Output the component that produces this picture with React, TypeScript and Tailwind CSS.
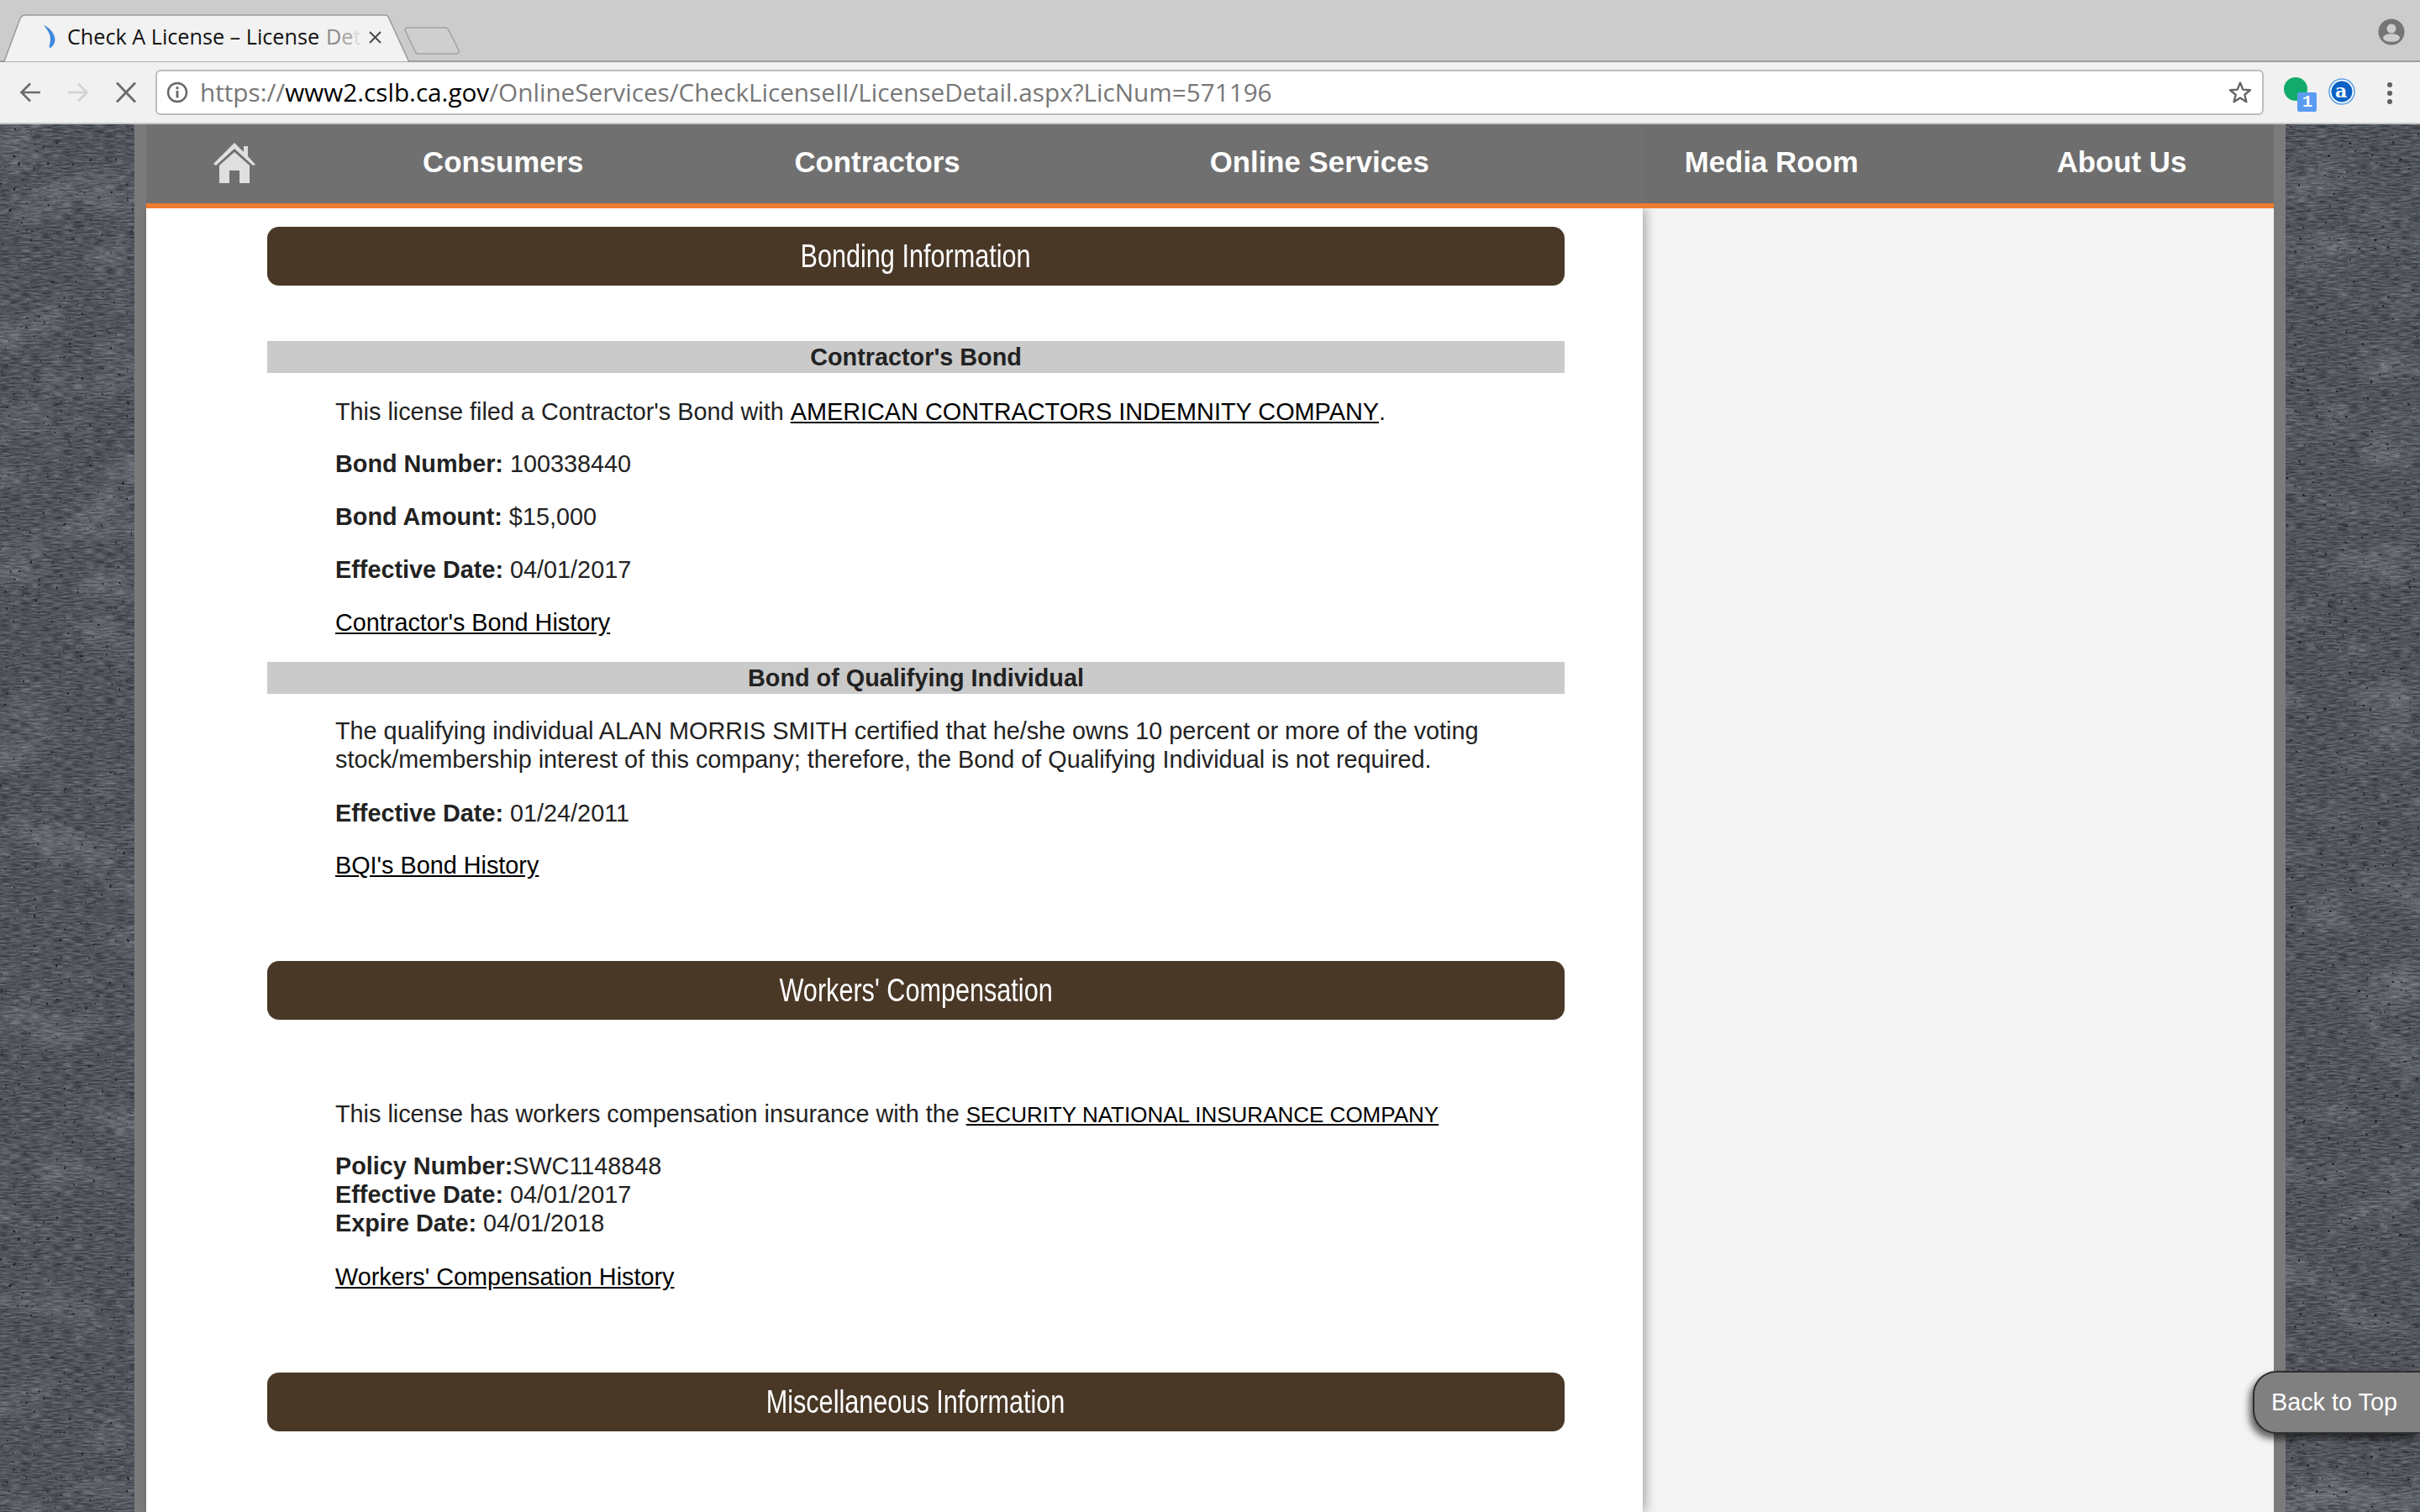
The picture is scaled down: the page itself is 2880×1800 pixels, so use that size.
import React from "react";

const Texture = ({ id }: { id: string }) => (
  <svg className="block h-full w-full" aria-hidden="true">
    <defs>
      <filter id={id} x="0" y="0" width="100%" height="100%" colorInterpolationFilters="sRGB">
        <feTurbulence type="fractalNoise" baseFrequency="0.08 0.5" numOctaves={3} seed={id === "a" ? 4 : 9} result="fine" />
        <feColorMatrix in="fine" type="matrix" values="0.36 0 0 0 0.135  0.36 0 0 0 0.15  0.36 0 0 0 0.175  0 0 0 0 1" result="weave" />
        <feTurbulence type="fractalNoise" baseFrequency="0.012 0.018" numOctaves={3} seed={id === "a" ? 11 : 23} result="cloud" />
        <feColorMatrix in="cloud" type="matrix" values="0.9 0 0 0 -0.45  0.9 0 0 0 -0.45  0.9 0 0 0 -0.45  0 0 0 0 1" result="cloudTone" />
        <feComposite in="weave" in2="cloudTone" operator="arithmetic" k1="0" k2="1" k3="0.28" k4="0" result="base" />
        <feTurbulence type="fractalNoise" baseFrequency="0.2" numOctaves={2} seed={id === "a" ? 31 : 37} result="speckNoise" />
        <feColorMatrix in="speckNoise" type="matrix" values="0 0 0 0 0.13  0 0 0 0 0.14  0 0 0 0 0.16  14 0 0 0 -10.2" result="specks" />
        <feMerge>
          <feMergeNode in="base" />
          <feMergeNode in="specks" />
        </feMerge>
      </filter>
    </defs>
    <rect width="100%" height="100%" fill="#4c525c" filter={`url(#${id})`} />
  </svg>
);

const Header = ({ children, className = "" }: { children: React.ReactNode; className?: string }) => (
  <div className={`flex h-[70px] items-center justify-center rounded-[14px] bg-[#4a3827] text-white ${className}`}>
    <span className="inline-block scale-x-[0.785] whitespace-nowrap font-['Liberation_Sans'] text-[39px]">{children}</span>
  </div>
);

const SubHeader = ({ children, className = "" }: { children: React.ReactNode; className?: string }) => (
  <div className={`flex h-[38px] items-center justify-center bg-[#cacaca] pb-[1px] text-[28.8px] font-bold text-[#222] ${className}`}>
    {children}
  </div>
);

const Row = ({ children, className = "" }: { children: React.ReactNode; className?: string }) => (
  <p className={`whitespace-nowrap pl-[81px] ${className}`}>{children}</p>
);

const Link = ({ children, className = "" }: { children: React.ReactNode; className?: string }) => (
  <a className={`text-black underline ${className}`}>{children}</a>
);

const navItems: [string, string][] = [
  ["Consumers", "ml-[199px]"],
  ["Contractors", "ml-[251px]"],
  ["Online Services", "ml-[297px]"],
  ["Media Room", "ml-[304px]"],
  ["About Us", "ml-[236px]"],
];

export default function App() {
  return (
    <div className="relative flex h-[1800px] w-[2880px] flex-col overflow-hidden font-['Liberation_Sans',sans-serif]">
      {/* tab strip */}
      <div className="relative flex h-[74px] shrink-0 items-center border-b-2 border-[#9d9d9d] bg-[#cccccc]">
        <svg className="absolute left-0 top-0" width="560" height="74" aria-hidden="true">
          <path d="M5 73 L24 22 Q26 18 30 18 L458 18 Q462 18 463 22 L487 74 L5 74 Z" fill="#f2f2f2" stroke="#999" strokeWidth="1.5" />
          <path d="M482 36 Q482 33 486 33 L530 33 Q533 33 534 36 L546 60 Q546 64 543 64 L498 64 Q495 64 494 61 Z" fill="#cfcfcf" stroke="#a2a2a2" strokeWidth="1.5" />
          <path d="M52 30 C64 35 71 50 60 57 C57 57 60 52 60 47 C60 40 56 35 52 30 Z" fill="#3f88dc" />
        </svg>
        <div className="relative ml-[80px] mt-[13px] flex items-center whitespace-nowrap font-['Open_Sans',sans-serif] text-[25.2px] leading-[30px] text-[#111]">
          <span>Check A License – License</span>
          <span className="ml-[8px] text-[#8a8a8a]">D</span>
          <span className="text-[#a8a8a8]">e</span>
          <span className="text-[#dcdcdc]">t</span>
        </div>
        <svg className="absolute left-[439px] top-[37px]" width="15" height="15" viewBox="0 0 15 15" aria-hidden="true">
          <path d="M1 1 L14 14 M14 1 L1 14" stroke="#444" strokeWidth="1.8" />
        </svg>
        <svg className="absolute left-[2830px] top-[22px]" width="32" height="32" viewBox="0 0 32 32" aria-hidden="true">
          <circle cx="16" cy="16" r="15.5" fill="#757575" />
          <circle cx="16" cy="12" r="5.5" fill="#cccccc" />
          <ellipse cx="16" cy="23" rx="10" ry="4.8" fill="#cccccc" />
        </svg>
      </div>

      {/* toolbar */}
      <div className="flex h-[74px] shrink-0 items-center border-b-2 border-[#c8c8c8] bg-[#f1f1f1] pl-[7px]">
        <div className="flex w-[57px] justify-center">
          <svg width="26" height="26" viewBox="0 0 26 26" fill="none" stroke="#6b6b6b" strokeWidth="2.6" aria-hidden="true">
            <path d="M25 13 H3 M13 2.5 L2.5 13 L13 23.5" />
          </svg>
        </div>
        <div className="flex w-[57px] justify-center">
          <svg width="26" height="26" viewBox="0 0 26 26" fill="none" stroke="#d2d2d2" strokeWidth="2.6" aria-hidden="true">
            <path d="M1 13 H23 M13 2.5 L23.5 13 L13 23.5" />
          </svg>
        </div>
        <div className="flex w-[57px] justify-center">
          <svg width="26" height="26" viewBox="0 0 26 26" fill="none" stroke="#6b6b6b" strokeWidth="2.8" aria-hidden="true">
            <path d="M2 1.5 L24 24.5 M24 1.5 L2 24.5" />
          </svg>
        </div>
        <div className="ml-[7px] flex h-[54px] flex-1 items-center rounded-[6px] border-2 border-[#bcbcbc] bg-white pl-[11px] pr-[11px]">
          <svg width="26" height="26" viewBox="0 0 26 26" fill="none" aria-hidden="true">
            <circle cx="13" cy="13" r="11" stroke="#666" strokeWidth="2.4" />
            <circle cx="13" cy="7.8" r="1.7" fill="#666" />
            <path d="M13 11 V19.5" stroke="#666" strokeWidth="2.8" />
          </svg>
          <div className="ml-[14px] whitespace-nowrap font-['Open_Sans',sans-serif] text-[29.7px] leading-[34px] text-[#777]">
            https://<span className="text-black">www2.cslb.ca.gov</span>/OnlineServices/CheckLicenseII/LicenseDetail.aspx?LicNum=571196
          </div>
          <svg className="ml-auto" width="30" height="30" viewBox="0 0 30 30" fill="none" aria-hidden="true">
            <path d="M15 3.5 L18.3 11.6 L27 12.2 L20.3 17.7 L22.4 26.2 L15 21.6 L7.6 26.2 L9.7 17.7 L3 12.2 L11.7 11.6 Z" stroke="#666" strokeWidth="2.4" strokeLinejoin="round" />
          </svg>
        </div>
        <div className="relative h-[74px] w-[186px] shrink-0">
          <svg className="absolute left-[24px] top-[19px]" width="40" height="42" viewBox="0 0 40 42" aria-hidden="true">
            <circle cx="14" cy="14" r="14" fill="#13ab6c" />
            <rect x="16" y="18" width="23" height="23" rx="2" fill="#5b9cf2" />
          </svg>
          <span className="absolute left-[46px] top-[38px] font-['Liberation_Mono',monospace] text-[20px] font-bold leading-[22px] text-white">1</span>
          <svg className="absolute left-[77px] top-[20px]" width="32" height="32" viewBox="0 0 32 32" aria-hidden="true">
            <circle cx="16" cy="16" r="15" fill="#fff" stroke="#5b9fe6" strokeWidth="1.5" />
            <circle cx="16" cy="16" r="12.5" fill="#0b62c4" />
          </svg>
          <span className="absolute left-[85px] top-[21px] font-['DejaVu_Serif',serif] text-[22px] font-bold leading-[28px] text-white">a</span>
          <svg className="absolute left-[146px] top-[24px]" width="8" height="28" viewBox="0 0 8 28" aria-hidden="true">
            <circle cx="4" cy="4" r="3" fill="#5f5f5f" />
            <circle cx="4" cy="14" r="3" fill="#5f5f5f" />
            <circle cx="4" cy="24" r="3" fill="#5f5f5f" />
          </svg>
        </div>
      </div>

      {/* page */}
      <div className="flex min-h-0 flex-1">
        <div className="w-[160px] shrink-0"><Texture id="a" /></div>
        <div className="flex w-[2560px] shrink-0 flex-col border-x-[14px] border-[#7b7b7b]">
          <nav className="relative z-10 flex h-[100px] shrink-0 items-center border-b-[6px] border-[#ed7c30] bg-[linear-gradient(90deg,#707070_1781px,#6e6e6e_1781px)] pb-[4px] text-[34.8px] font-bold text-white">
            <svg className="ml-[80px] h-[50px] w-[50px]" viewBox="0 0 50 50" aria-hidden="true">
              <path d="M25 2 L36 13 V6 H41 V18 L50 28 L47 29 L25 9 L3 29 L0 27 Z" fill="#dfdfdf" />
              <path d="M25 13 L43 29 V50 H31 V35 H19 V50 H7 V29 Z" fill="#dfdfdf" />
            </svg>
            {navItems.map(([label, ml]) => (
              <span key={label} className={`${ml} whitespace-nowrap`}>{label}</span>
            ))}
          </nav>
          <div className="flex min-h-0 flex-1">
            <main className="relative z-[1] w-[1781px] shrink-0 bg-white pl-[144px] pr-[93px] pt-[22px] text-[28.8px] leading-[34px] text-[#222] shadow-[4px_0_12px_rgba(0,0,0,0.3)]">
              <Header>Bonding Information</Header>
              <SubHeader className="mt-[66px]">Contractor's Bond</SubHeader>
              <Row className="mt-[29px]">This license filed a Contractor's Bond with <Link className="text-[28.85px]">AMERICAN CONTRACTORS INDEMNITY COMPANY</Link>.</Row>
              <Row className="mt-[28px]"><b>Bond Number:</b> 100338440</Row>
              <Row className="mt-[29px]"><b>Bond Amount:</b> $15,000</Row>
              <Row className="mt-[29px]"><b>Effective Date:</b> 04/01/2017</Row>
              <Row className="mt-[29px]"><Link>Contractor's Bond History</Link></Row>
              <SubHeader className="mt-[30px]">Bond of Qualifying Individual</SubHeader>
              <Row className="mt-[27px]">The qualifying individual ALAN MORRIS SMITH certified that he/she owns 10 percent or more of the voting<br />stock/membership interest of this company; therefore, the Bond of Qualifying Individual is not required.</Row>
              <Row className="mt-[30px]"><b>Effective Date:</b> 01/24/2011</Row>
              <Row className="mt-[28px]"><Link>BQI's Bond History</Link></Row>
              <Header className="mt-[97px]">Workers' Compensation</Header>
              <Row className="mt-[95px]">This license has workers compensation insurance with the <Link className="text-[26px]">SECURITY NATIONAL INSURANCE COMPANY</Link></Row>
              <Row className="mt-[27px]"><b>Policy Number:</b>SWC1148848<br /><b>Effective Date:</b> 04/01/2017<br /><b>Expire Date:</b> 04/01/2018</Row>
              <Row className="mt-[30px]"><Link>Workers' Compensation History</Link></Row>
              <Header className="mt-[97px]">Miscellaneous Information</Header>
            </main>
            <aside className="flex-1 bg-[#f4f4f4]" />
          </div>
        </div>
        <div className="w-[160px] shrink-0"><Texture id="b" /></div>
      </div>

      {/* back to top */}
      <div className="absolute left-[2681px] top-[1632px] z-20 flex h-[75px] w-[199px] items-center rounded-l-[28px] border-2 border-r-0 border-[#2e2e2e] bg-[#808080] pl-[20px] text-[28.8px] text-white shadow-[-4px_6px_8px_rgba(0,0,0,0.6)]">
        Back to Top
      </div>
    </div>
  );
}
